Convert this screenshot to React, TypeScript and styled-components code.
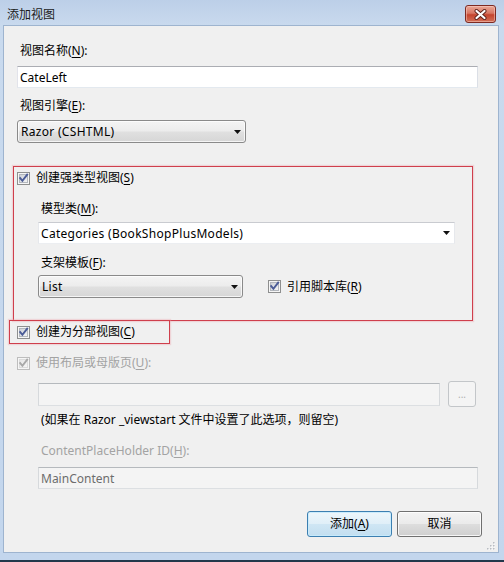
import React from "react";
import styled, { createGlobalStyle } from "styled-components";

const FONT = `"Noto Sans", "Noto Sans CJK SC", sans-serif`;

const Global = createGlobalStyle`
  html, body { margin: 0; padding: 0; background: #c5d7ec; }
  body { font-family: ${FONT}; font-size: 12px; color: #000; }
  #root { width: 504px; height: 562px; }
  u { text-decoration-thickness: 1px; text-underline-offset: 2px; }
`;

const Window = styled.div`
  width: 504px;
  height: 562px;
  box-sizing: border-box;
  display: flex;
  flex-direction: column;
  background: linear-gradient(180deg, #bccfe8 0px, #c9daee 26px, #c3d6ed 100%);
  border-bottom: 2px solid #22384b;
  overflow: hidden;
`;

const TitleBar = styled.div`
  height: 25px;
  flex: none;
  display: flex;
  align-items: flex-start;
  justify-content: space-between;
  padding: 0 8px 0 7px;
`;

const Title = styled.div`
  margin-top: 7px;
  font-size: 12px;
  line-height: 16px;
  color: #1b1b1b;
`;

const CloseButton = styled.div`
  margin-top: 5px;
  width: 31px;
  height: 18px;
  box-sizing: border-box;
  border: 1px solid #7d2a22;
  border-radius: 3px;
  background: linear-gradient(180deg, #e9a797 0%, #d87763 45%, #c5442d 55%, #d27058 100%);
  box-shadow: inset 0 0 0 1px rgba(255, 220, 210, 0.45);
  display: flex;
  align-items: center;
  justify-content: center;
`;

const Client = styled.div`
  flex: 1;
  margin: 0 5px 7px 3px;
  border: 1px solid #9eb4cf;
  background: #f0f0f0;
  position: relative;
  padding: 17px 0 0 13px;
  display: flex;
  flex-direction: column;
  align-items: flex-start;
`;

const Label = styled.div<{ $indent?: number; $gap?: number; $disabled?: boolean }>`
  margin-top: ${(p) => p.$gap ?? 0}px;
  padding-left: ${(p) => p.$indent ?? 3}px;
  height: 16px;
  line-height: 16px;
  color: ${(p) => (p.$disabled ? "#a3a3a3" : "#000")};
  white-space: nowrap;
`;

const TextBox = styled.div<{ $w: number; $h?: number; $gap?: number; $ml?: number; $disabled?: boolean }>`
  box-sizing: border-box;
  flex: none;
  width: ${(p) => p.$w}px;
  height: ${(p) => p.$h ?? 22}px;
  margin-top: ${(p) => p.$gap ?? 0}px;
  margin-left: ${(p) => p.$ml ?? 0}px;
  border: 1px solid;
  border-color: ${(p) =>
    p.$disabled ? "#b5b9bd #d6d9dc #dcdfe2 #d6d9dc" : "#abadb3 #dbdfe6 #e3e9ef #e2e3ea"};
  background: ${(p) => (p.$disabled ? "#f4f4f4" : "#fff")};
  color: ${(p) => (p.$disabled ? "#6d6d6d" : "#000")};
  padding-left: 2px;
  display: flex;
  align-items: center;
  white-space: nowrap;
`;

const Select = styled.div<{ $w: number; $gap?: number; $ml?: number }>`
  box-sizing: border-box;
  flex: none;
  width: ${(p) => p.$w}px;
  height: 23px;
  margin-top: ${(p) => p.$gap ?? 0}px;
  margin-left: ${(p) => p.$ml ?? 0}px;
  border: 1px solid #8a8a8a;
  border-radius: 3px;
  background: linear-gradient(180deg, #f4f4f4 0%, #ececec 48%, #e0e0e0 52%, #d6d6d6 100%);
  box-shadow: inset 0 0 0 1px rgba(255, 255, 255, 0.75);
  padding: 0 4px 0 3px;
  display: flex;
  align-items: center;
  justify-content: space-between;
  white-space: nowrap;
  letter-spacing: 0.3px;
`;

const Combo = styled.div<{ $w: number; $gap?: number; $ml?: number }>`
  box-sizing: border-box;
  flex: none;
  width: ${(p) => p.$w}px;
  height: 22px;
  margin-top: ${(p) => p.$gap ?? 0}px;
  margin-left: ${(p) => p.$ml ?? 0}px;
  border: 1px solid;
  border-color: #c9cbd0 #e6e8ec #eceef1 #e6e8ec;
  background: #fff;
  padding: 0 4px 0 2px;
  display: flex;
  align-items: center;
  justify-content: space-between;
  white-space: nowrap;
  letter-spacing: 0.3px;
`;

const RedBox = styled.div<{ $w: number; $ml: number; $gap?: number }>`
  box-sizing: border-box;
  flex: none;
  width: ${(p) => p.$w}px;
  margin-left: ${(p) => p.$ml}px;
  margin-top: ${(p) => p.$gap ?? 0}px;
  border: 1px solid #cf3f4c;
  box-shadow: 0 0 1px 1px rgba(238, 160, 170, 0.35);
  display: flex;
  flex-direction: column;
  align-items: flex-start;
`;

const CheckRow = styled.label<{ $gap?: number; $ml?: number; $disabled?: boolean }>`
  display: flex;
  align-items: center;
  gap: 6px;
  height: 16px;
  line-height: 16px;
  margin-top: ${(p) => p.$gap ?? 0}px;
  margin-left: ${(p) => p.$ml ?? 0}px;
  color: ${(p) => (p.$disabled ? "#a3a3a3" : "#000")};
  white-space: nowrap;
  svg { flex: none; }
`;

const Row = styled.div<{ $gap?: number; $ml?: number }>`
  display: flex;
  align-items: center;
  margin-top: ${(p) => p.$gap ?? 0}px;
  margin-left: ${(p) => p.$ml ?? 0}px;
`;

const Spacer = styled.div<{ $h: number }>`
  height: ${(p) => p.$h}px;
  flex: none;
`;

const SmallButton = styled.div`
  box-sizing: border-box;
  width: 28px;
  height: 26px;
  margin-left: 8px;
  border: 1px solid #c3c6c9;
  border-radius: 3px;
  background: #f4f4f4;
  color: #b0b0b0;
  font-size: 10px;
  display: flex;
  align-items: center;
  justify-content: center;
  padding-bottom: 1px;
`;

const ButtonRow = styled.div`
  align-self: stretch;
  display: flex;
  justify-content: flex-end;
  gap: 5px;
  margin-top: 22px;
  margin-right: 16px;
`;

const PushButton = styled.div<{ $default?: boolean }>`
  box-sizing: border-box;
  width: 85px;
  height: 26px;
  border: 1px solid ${(p) => (p.$default ? "#3c7fb1" : "#707070")};
  border-radius: 3px;
  background: ${(p) =>
    p.$default
      ? "linear-gradient(180deg, #edf6fb 0%, #e0eff8 48%, #cfe6f4 52%, #c2def0 100%)"
      : "linear-gradient(180deg, #f3f3f3 0%, #ebebeb 48%, #dddddd 52%, #cfcfcf 100%)"};
  box-shadow: inset 0 0 0 1px ${(p) => (p.$default ? "rgba(200, 235, 252, 0.9)" : "rgba(255,255,255,0.8)")};
  display: flex;
  align-items: center;
  justify-content: center;
  line-height: 16px;
  white-space: nowrap;
`;

const Grip = styled.svg`
  position: absolute;
  right: 3px;
  bottom: 2px;
`;

const Arrow = () => (
  <svg width="7" height="4" viewBox="0 0 7 4">
    <path d="M0 0 H7 L3.5 4 Z" fill="#111" />
  </svg>
);

const CheckBox = ({ disabled }: { disabled?: boolean }) => {
  const id = disabled ? "cbd" : "cbe";
  return (
    <svg width="13" height="13" viewBox="0 0 13 13">
      <defs>
        <linearGradient id={id} x1="0" y1="0" x2="1" y2="1">
          <stop offset="0" stopColor={disabled ? "#e6e6e6" : "#cbcfd5"} />
          <stop offset="1" stopColor="#f7f7f7" />
        </linearGradient>
      </defs>
      <rect x="0.5" y="0.5" width="12" height="12" fill="#f6f6f6" stroke={disabled ? "#bdbdbd" : "#8e8f8f"} />
      <rect x="2.5" y="2.5" width="8" height="8" fill={`url(#${id})`} stroke={disabled ? "#dcdcdc" : "#b3b7bd"} />
      <path
        d="M3.2 6.2 L5.4 8.8 L10.2 2.6"
        stroke={disabled ? "#a9a9a9" : "#4b5c97"}
        strokeWidth="1.9"
        fill="none"
        strokeLinecap="square"
      />
    </svg>
  );
};

const gripDots = [
  [6, 0],
  [6, 3],
  [3, 3],
  [6, 6],
  [3, 6],
  [0, 6],
];

export default function App() {
  return (
    <>
      <Global />
      <Window>
        <TitleBar>
          <Title>添加视图</Title>
          <CloseButton>
            <svg width="13" height="11" viewBox="0 0 13 11">
              <path d="M2.5 2 L10.5 9 M10.5 2 L2.5 9" stroke="#5b2019" strokeWidth="4" strokeLinecap="round" />
              <path d="M2.5 2 L10.5 9 M10.5 2 L2.5 9" stroke="#ffffff" strokeWidth="2.2" strokeLinecap="round" />
            </svg>
          </CloseButton>
        </TitleBar>
        <Client>
          <Label>
            视图名称(<u>N</u>):
          </Label>
          <TextBox $w={461} $gap={7}>CateLeft</TextBox>
          <Label $gap={10}>
            视图引擎(<u>E</u>):
          </Label>
          <Select $w={229} $gap={6}>
            <span>Razor (CSHTML)</span>
            <Arrow />
          </Select>

          <RedBox $w={460} $ml={-4} $gap={23}>
            <CheckRow $gap={3} $ml={3}>
              <CheckBox />
              <span>
                创建强类型视图(<u>S</u>)
              </span>
            </CheckRow>
            <Label $indent={27} $gap={15}>
              模型类(<u>M</u>):
            </Label>
            <Combo $w={417} $ml={24} $gap={5}>
              <span>Categories (BookShopPlusModels)</span>
              <Arrow />
            </Combo>
            <Label $indent={27} $gap={11}>
              支架模板(<u>F</u>):
            </Label>
            <Row $gap={4} $ml={24}>
              <Select $w={205}>
                <span>List</span>
                <Arrow />
              </Select>
              <CheckRow $ml={25}>
                <CheckBox />
                <span>
                  引用脚本库(<u>R</u>)
                </span>
              </CheckRow>
            </Row>
            <Spacer $h={22} />
          </RedBox>

          <RedBox $w={161} $ml={-8} $gap={-1}>
            <CheckRow $gap={3} $ml={7}>
              <CheckBox />
              <span>
                创建为分部视图(<u>C</u>)
              </span>
            </CheckRow>
            <Spacer $h={3} />
          </RedBox>

          <CheckRow $gap={11} $disabled>
            <CheckBox disabled />
            <span>
              使用布局或母版页(<u>U</u>):
            </span>
          </CheckRow>
          <Row $gap={10} $ml={21}>
            <TextBox $w={402} $h={23} $disabled />
            <SmallButton>...</SmallButton>
          </Row>
          <Label $indent={24} $gap={5}>
            (如果在 Razor _viewstart 文件中设置了此选项，则留空)
          </Label>
          <Label $indent={24} $gap={15} $disabled>
            ContentPlaceHolder ID(<u>H</u>):
          </Label>
          <TextBox $w={440} $gap={8} $ml={21} $disabled>
            MainContent
          </TextBox>
          <ButtonRow>
            <PushButton $default>
              添加(<u>A</u>)
            </PushButton>
            <PushButton>取消</PushButton>
          </ButtonRow>
          <Grip width="8" height="8" viewBox="0 0 8 8">
            {gripDots.map(([x, y], i) => (
              <g key={i}>
                <rect x={x + 1} y={y + 1} width="1.5" height="1.5" fill="#ffffff" />
                <rect x={x} y={y} width="1.5" height="1.5" fill="#b8bcc2" />
              </g>
            ))}
          </Grip>
        </Client>
      </Window>
    </>
  );
}
